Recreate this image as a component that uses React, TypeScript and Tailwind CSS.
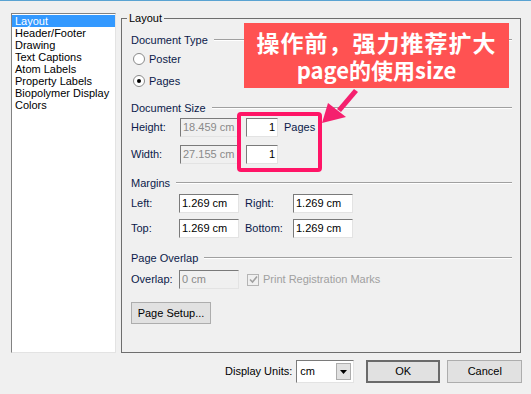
import React from "react";

const font = { fontFamily: '"Liberation Sans", Arial, sans-serif' };

function Sep({ label }: { label: string }) {
  return (
    <div className="flex items-center h-[14px] pr-[8px]">
      <span className="text-[#0b1a4a] whitespace-nowrap">{label}</span>
      <div className="flex-1 ml-[6px] h-[2px] border-t border-t-[#a0a0a0] border-b border-b-white" />
    </div>
  );
}

function Input({ value, w, disabled, right }: { value: string; w: string; disabled?: boolean; right?: boolean }) {
  return (
    <div
      className={`${w} h-[19px] flex items-center overflow-hidden whitespace-nowrap border border-t-[#7a7a7a] border-l-[#7a7a7a] border-r-[#e3e3e3] border-b-[#e3e3e3] px-[2px] ${
        disabled ? "bg-[#f0f0f0] text-[#8a8a8a]" : "bg-white text-black"
      } ${right ? "justify-end" : ""}`}
    >
      <span className="leading-none whitespace-nowrap">{value}</span>
    </div>
  );
}

function Radio({ checked, label }: { checked?: boolean; label: string }) {
  return (
    <div className="flex items-center h-[14px] pl-[2px]">
      <div className="w-[12px] h-[12px] rounded-full border border-[#8a8a8a] bg-white flex items-center justify-center">
        {checked && <div className="w-[4px] h-[4px] rounded-full bg-black" />}
      </div>
      <span className="ml-[4px] text-[#0b1a4a]">{label}</span>
    </div>
  );
}

export default function App() {
  const items = [
    "Layout",
    "Header/Footer",
    "Drawing",
    "Text Captions",
    "Atom Labels",
    "Property Labels",
    "Biopolymer Display",
    "Colors",
  ];
  return (
    <div
      className="w-[531px] h-[394px] bg-[#f0f0f0] relative overflow-hidden border-t border-t-[#5aa3d2] text-[11px]"
      style={font}
    >
      <div className="flex pt-[12px] pl-[11px]">
        {/* list box */}
        <div className="w-[105px] h-[340px] bg-white border border-t-[#828282] border-l-[#828282] border-r-[#e3e3e3] border-b-[#e3e3e3] pt-[1px]">
          {items.map((it, i) => (
            <div
              key={it}
              className={`h-[12px] leading-[12px] pl-[3px] whitespace-nowrap ${
                i === 0 ? "bg-[#3399ff] text-white" : "text-black"
              }`}
            >
              {it}
            </div>
          ))}
        </div>

        {/* group box */}
        <div className="relative ml-[5px] mt-[5px] w-[400px] h-[335px] border border-[#6e6e6e] pl-[9px]">
          <div className="absolute left-[5px] top-[-8px] bg-[#f0f0f0] px-[2px] leading-[14px] text-black">
            Layout
          </div>

          <div className="mt-[14px]">
            <Sep label="Document Type" />
          </div>
          <div className="mt-[5px]">
            <Radio label="Poster" />
          </div>
          <div className="mt-[8px]">
            <Radio label="Pages" checked />
          </div>
          <div className="mt-[13px]">
            <Sep label="Document Size" />
          </div>

          <div className="mt-[3px] flex items-center">
            <span className="w-[49px] text-[#0b1a4a]">Height:</span>
            <Input value="18.459 cm" w="w-[58px]" disabled />
            <div className="ml-[8px]">
              <Input value="1" w="w-[32px]" right />
            </div>
            <span className="ml-[6px] text-[#0b1a4a]">Pages</span>
          </div>
          <div className="mt-[8px] flex items-center">
            <span className="w-[49px] text-[#0b1a4a]">Width:</span>
            <Input value="27.155 cm" w="w-[58px]" disabled />
            <div className="ml-[8px]">
              <Input value="1" w="w-[32px]" right />
            </div>
          </div>

          <div className="mt-[12px]">
            <Sep label="Margins" />
          </div>
          <div className="mt-[4px] flex items-center">
            <span className="w-[48px] text-[#0b1a4a]">Left:</span>
            <Input value="1.269 cm" w="w-[60px]" />
            <span className="ml-[6px] w-[48px] text-[#0b1a4a]">Right:</span>
            <Input value="1.269 cm" w="w-[60px]" />
          </div>
          <div className="mt-[6px] flex items-center">
            <span className="w-[48px] text-[#0b1a4a]">Top:</span>
            <Input value="1.269 cm" w="w-[60px]" />
            <span className="ml-[6px] w-[48px] text-[#0b1a4a]">Bottom:</span>
            <Input value="1.269 cm" w="w-[60px]" />
          </div>

          <div className="mt-[13px]">
            <Sep label="Page Overlap" />
          </div>
          <div className="mt-[5px] flex items-center">
            <span className="w-[48px] text-[#0b1a4a]">Overlap:</span>
            <Input value="0 cm" w="w-[60px]" disabled />
            <div className="ml-[8px] w-[12px] h-[12px] border border-[#b5b5b5] bg-[#f0f0f0] flex items-center justify-center">
              <svg width="9" height="9" viewBox="0 0 9 9">
                <path d="M1 4.5 L3.5 7 L8 1.5" stroke="#a0a0a0" strokeWidth="1.6" fill="none" />
              </svg>
            </div>
            <span className="ml-[4px] text-[#a0a0a0]">Print Registration Marks</span>
          </div>

          <div className="mt-[13px]">
            <button className="w-[80px] h-[22px] bg-[#e1e1e1] border border-[#adadad] text-black text-[11px] leading-none" style={font}>
              Page Setup...
            </button>
          </div>
        </div>
      </div>

      {/* bottom row */}
      <div className="flex items-center mt-[7px] pl-[225px]">
        <span className="text-black">Display Units:</span>
        <div className="ml-[4px] w-[58px] h-[23px] bg-white border border-t-[#7a7a7a] border-l-[#7a7a7a] border-r-[#e3e3e3] border-b-[#e3e3e3] flex items-center pl-[3px] pr-[2px]">
          <span className="flex-1 text-black">cm</span>
          <div className="w-[15px] h-[17px] bg-[#e1e1e1] border border-[#adadad] flex items-center justify-center">
            <svg width="7" height="4" viewBox="0 0 7 4">
              <path d="M0 0 L7 0 L3.5 4 Z" fill="#000" />
            </svg>
          </div>
        </div>
        <button className="ml-[12px] w-[74px] h-[23px] bg-[#e1e1e1] border-2 border-[#6a6a6a] text-black text-[11px]" style={font}>
          OK
        </button>
        <button className="ml-[7px] w-[75px] h-[23px] bg-[#e1e1e1] border border-[#adadad] text-black text-[11px]" style={font}>
          Cancel
        </button>
      </div>

      {/* annotation overlay */}
      <div
        className="absolute left-[244px] top-[22px] w-[265px] h-[65px] bg-[#ff5252] flex flex-col items-center justify-center text-white font-bold"
        style={{ fontFamily: '"Noto Sans CJK SC", "Noto Sans", sans-serif' }}
      >
        <div className="text-[23px] leading-[28px] tracking-[1px]">操作前，强力推荐扩大</div>
        <div className="text-[22px] leading-[27px]">page的使用size</div>
      </div>
      <div className="absolute left-[237px] top-[111px] w-[85px] h-[60px] border-[4px] border-[#ff1466] rounded-[4px]" />
      <svg className="absolute left-[318px] top-[85px]" width="45" height="42" viewBox="0 0 45 42">
        <path d="M36 3 L40 6 L23 26 L19 23 Z" fill="#f5206e" />
        <path d="M4 37 L10 17 L28 31 Z" fill="#f5206e" />
      </svg>
    </div>
  );
}
